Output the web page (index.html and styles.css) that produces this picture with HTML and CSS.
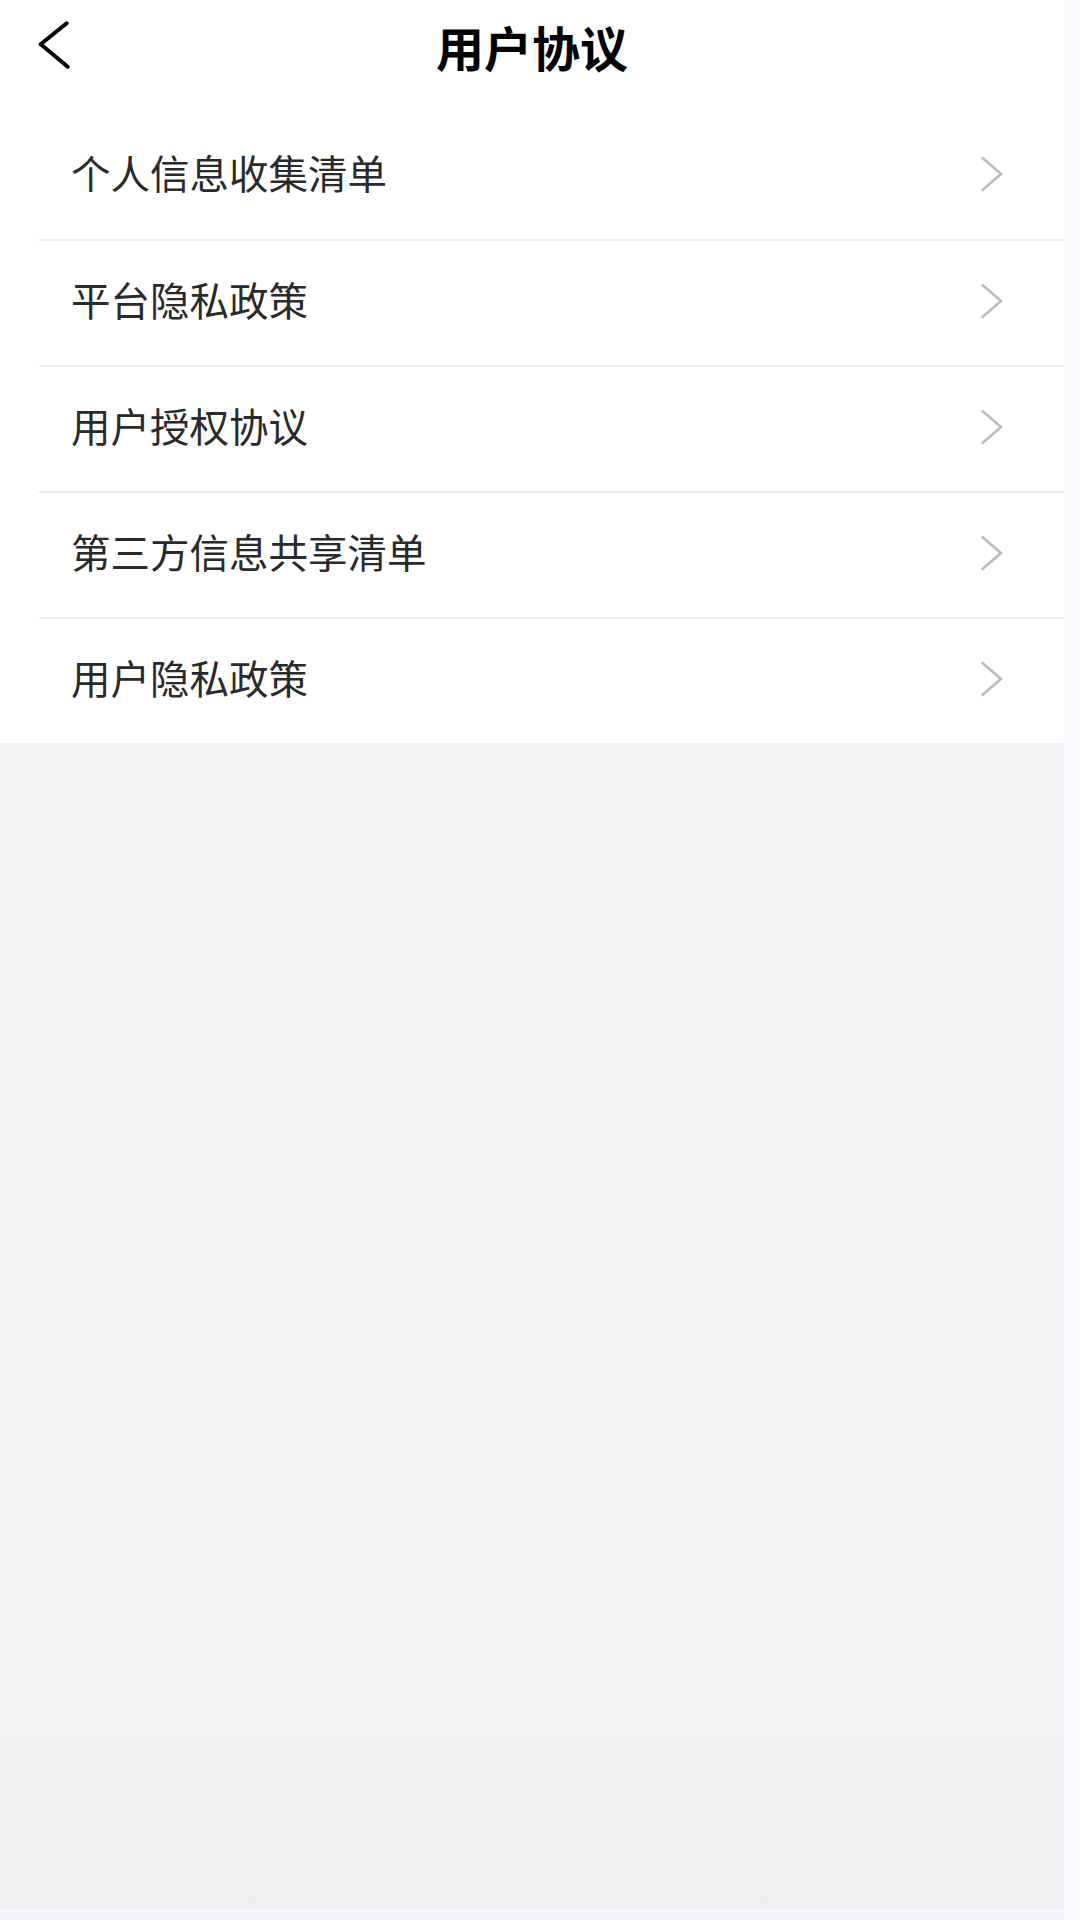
FILE: index.html
```html
<!DOCTYPE html>
<html lang="zh-CN">
<head>
<meta charset="utf-8">
<title>用户协议</title>
<link rel="stylesheet" href="styles.css">
</head>
<body>
<div class="screen">
  <div class="main">
    <header class="header">
      <div class="back">
        <svg width="34" height="50" viewBox="0 0 34 50"><path d="M30.7 2.3 L4.7 23.3 L31.7 45.7" fill="none" stroke="#000" stroke-width="4" stroke-linecap="round" stroke-linejoin="round"/></svg>
      </div>
      <h1 class="title">用户协议</h1>
      <div class="spacer"></div>
    </header>
    <ul class="list">
      <li class="row"><span class="label">个人信息收集清单</span><svg class="arrow" width="24" height="36" viewBox="0 0 24 36"><path d="M2.5 2 L21 18 L2.5 34" fill="none" stroke="#bbbbbb" stroke-width="2.5" stroke-linecap="round" stroke-linejoin="round"/></svg></li>
      <li class="row"><span class="label">平台隐私政策</span><svg class="arrow" width="24" height="36" viewBox="0 0 24 36"><path d="M2.5 2 L21 18 L2.5 34" fill="none" stroke="#bbbbbb" stroke-width="2.5" stroke-linecap="round" stroke-linejoin="round"/></svg></li>
      <li class="row"><span class="label">用户授权协议</span><svg class="arrow" width="24" height="36" viewBox="0 0 24 36"><path d="M2.5 2 L21 18 L2.5 34" fill="none" stroke="#bbbbbb" stroke-width="2.5" stroke-linecap="round" stroke-linejoin="round"/></svg></li>
      <li class="row"><span class="label">第三方信息共享清单</span><svg class="arrow" width="24" height="36" viewBox="0 0 24 36"><path d="M2.5 2 L21 18 L2.5 34" fill="none" stroke="#bbbbbb" stroke-width="2.5" stroke-linecap="round" stroke-linejoin="round"/></svg></li>
      <li class="row"><span class="label">用户隐私政策</span><svg class="arrow" width="24" height="36" viewBox="0 0 24 36"><path d="M2.5 2 L21 18 L2.5 34" fill="none" stroke="#bbbbbb" stroke-width="2.5" stroke-linecap="round" stroke-linejoin="round"/></svg></li>
    </ul>
    <div class="filler"></div>
    <div class="bottom"></div>
  </div>
  <div class="edge"></div>
</div>
</body>
</html>
```
FILE: styles.css
```css
* {
  box-sizing: border-box;
}
html, body {
  margin: 0;
  padding: 0;
}
body {
  width: 1080px;
  height: 1920px;
  font-family: "Noto Sans CJK SC", "Noto Sans", sans-serif;
  background: #f8f9fd;
}
.screen {
  display: flex;
  width: 1080px;
  height: 1920px;
}
.main {
  width: 1064px;
  display: flex;
  flex-direction: column;
}
.edge {
  flex: 1;
  background: #f8f9fd;
}
.header {
  height: 98px;
  background: #fff;
  display: grid;
  grid-template-columns: 1fr auto 1fr;
  align-items: center;
}
.back {
  align-self: start;
  padding: 21px 0 0 36px;
  line-height: 0;
}
.title {
  margin: 0 0 7px 0;
  font-size: 48px;
  font-weight: 700;
  color: #000;
  line-height: 1;
  letter-spacing: 0;
}
.list {
  list-style: none;
  margin: 0;
  padding: 15px 0 0 0;
  background: #fff;
}
.row {
  margin-left: 39px;
  height: 126px;
  padding: 0 60px 8px 32px;
  display: flex;
  align-items: center;
  justify-content: space-between;
}
.row + .row {
  border-top: 2px solid #eeeeef;
}
.label {
  font-size: 39.5px;
  color: #2a2a2a;
  line-height: 1;
}
.arrow {
  display: block;
  margin-top: 3px;
}
.filler {
  flex: 1;
  background: linear-gradient(#f2f3f5 0%, #f2f3f5 85%, #edeef0 100%);
}
.bottom {
  height: 11px;
  background: #f4f5f8;
}
```
